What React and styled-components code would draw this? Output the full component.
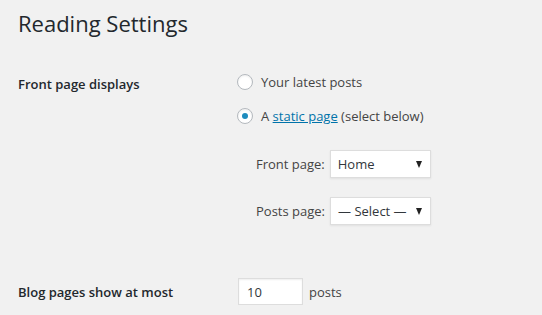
import React from "react";
import styled, { createGlobalStyle } from "styled-components";

const Global = createGlobalStyle`
  html, body { margin: 0; padding: 0; background: #f1f1f1; }
  body { font-family: "Open Sans", "Noto Sans", sans-serif; color: #444; font-size: 13px; }
`;

const Wrap = styled.div`
  padding: 0 18px;
  width: 542px;
  height: 315px;
  box-sizing: border-box;
  overflow: hidden;
`;

const Title = styled.h1`
  margin: 0;
  padding: 9px 0 0;
  font-size: 22px;
  font-weight: 400;
  line-height: 29px;
  color: #23282d;
`;

const Row = styled.div`
  display: grid;
  grid-template-columns: 220px 1fr;
  margin-top: ${(p) => p.$mt}px;
`;

const Th = styled.div`
  font-weight: 600;
  font-size: 13px;
  color: #23282d;
  line-height: 20px;
  padding-top: ${(p) => p.$pt || 0}px;
`;

const Td = styled.div`
  display: flex;
  flex-direction: column;
`;

const RadioLine = styled.label`
  display: flex;
  align-items: center;
  gap: 8px;
  height: 20px;
  margin-bottom: ${(p) => p.$mb || 0}px;
  line-height: 20px;
  margin-left: -1px;
`;

const Radio = styled.span`
  width: 16px;
  height: 16px;
  box-sizing: border-box;
  border-radius: 50%;
  border: 1px solid #b4b9be;
  background: #fff;
  box-shadow: inset 0 1px 2px rgba(0, 0, 0, 0.07);
  display: flex;
  align-items: center;
  justify-content: center;
  &::after {
    content: "";
    display: ${(p) => (p.$checked ? "block" : "none")};
    width: 6px;
    height: 6px;
    border-radius: 50%;
    background: #1e8cbe;
  }
`;

const Link = styled.a`
  color: #0073aa;
  text-decoration: underline;
`;

const SubList = styled.div`
  display: flex;
  flex-direction: column;
  gap: 19px;
  padding-left: 18px;
  margin-top: ${(p) => p.$mt}px;
`;

const SubLine = styled.div`
  display: flex;
  align-items: center;
  gap: 5px;
`;

const Select = styled.div`
  width: 101px;
  height: 28px;
  box-sizing: border-box;
  border: 1px solid #ddd;
  background: #fff;
  box-shadow: 0 1px 2px rgba(0, 0, 0, 0.07);
  display: flex;
  align-items: center;
  justify-content: space-between;
  padding: 0 8px 0 7px;
  color: #32373c;
`;

const Arrow = styled.span`
  width: 0;
  height: 0;
  border-left: 3.5px solid transparent;
  border-right: 3.5px solid transparent;
  border-top: 7px solid #222;
`;

const InputLine = styled.div`
  display: flex;
  align-items: center;
  gap: 6px;
`;

const NumInput = styled.div`
  width: 65px;
  height: 27px;
  box-sizing: border-box;
  border: 1px solid #ddd;
  background: #fff;
  box-shadow: inset 0 1px 2px rgba(0, 0, 0, 0.07);
  padding: 0 8px;
  display: flex;
  align-items: center;
  color: #32373c;
`;

export default function App() {
  return (
    <>
      <Global />
      <Wrap>
        <Title>Reading Settings</Title>
        <Row $mt={34}>
          <Th $pt={2}>Front page displays</Th>
          <Td>
            <RadioLine $mb={14}>
              <Radio />
              Your latest posts
            </RadioLine>
            <RadioLine>
              <Radio $checked />
              <span>
                A <Link>static page</Link> (select below)
              </span>
            </RadioLine>
            <SubList $mt={24}>
              <SubLine>
                Front page:
                <Select>
                  Home
                  <Arrow />
                </Select>
              </SubLine>
              <SubLine>
                Posts page:
                <Select>
                  — Select —
                  <Arrow />
                </Select>
              </SubLine>
            </SubList>
          </Td>
        </Row>
        <Row $mt={53}>
          <Th $pt={4}>Blog pages show at most</Th>
          <InputLine>
            <NumInput>10</NumInput>
            posts
          </InputLine>
        </Row>
      </Wrap>
    </>
  );
}
